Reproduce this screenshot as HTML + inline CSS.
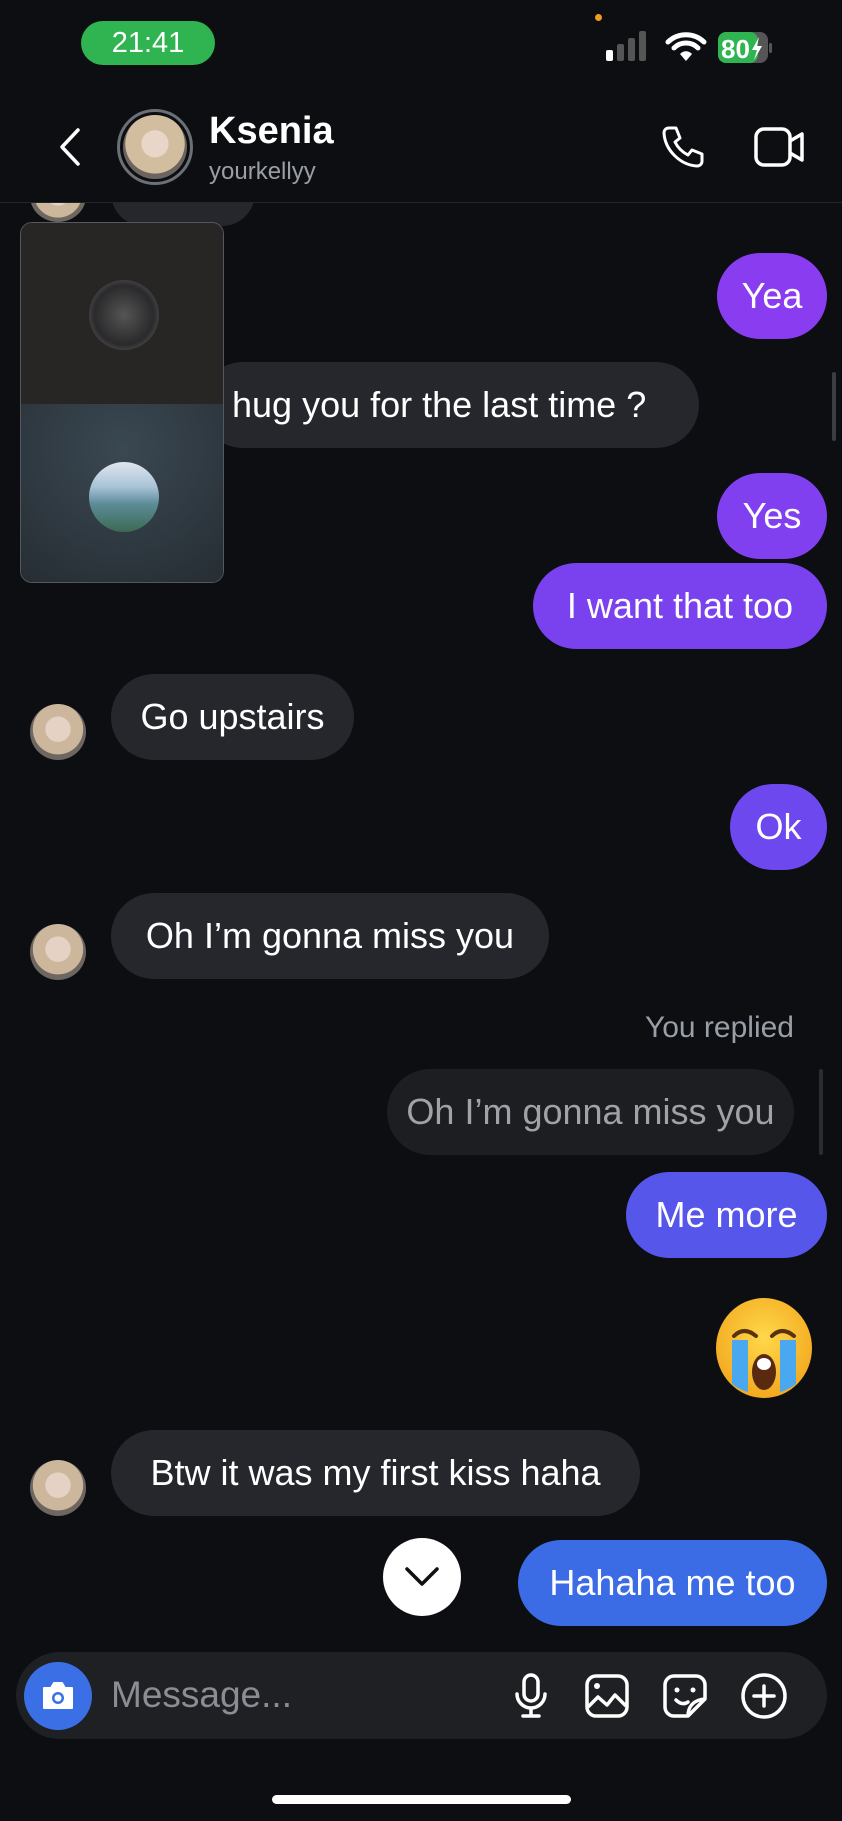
<!DOCTYPE html>
<html><head><meta charset="utf-8"><style>
*{margin:0;padding:0;box-sizing:border-box}
body{width:842px;height:1821px;background:#0c0e12;position:relative;overflow:hidden;font-family:"Liberation Sans",sans-serif;color:#fff}
.a{position:absolute}
.b{position:absolute;height:86px;border-radius:43px;line-height:86px;font-size:36px;white-space:nowrap;text-align:center;color:#fff}
.in{background:#25272c}
.av{position:absolute;width:56px;height:56px;border-radius:50%;background:radial-gradient(circle at 50% 45%,#e6d2c4 0 30%,#cdb79c 31% 60%,#6e6660 61%)}
</style></head><body>
<div class="a" style="left:81px;top:21px;width:134px;height:44px;border-radius:22px;background:#2fb451;font-size:29px;line-height:44px;text-align:center">21:41</div>
<div class="a" style="left:595px;top:14px;width:7px;height:7px;border-radius:50%;background:#f09a20"></div>
<svg class="a" style="left:606px;top:30px" width="184" height="36">
<rect x="0" y="20" width="7" height="11" rx="2" fill="#fff"/>
<rect x="11" y="14" width="7" height="17" rx="2" fill="#555"/>
<rect x="22" y="8" width="7" height="23" rx="2" fill="#555"/>
<rect x="33" y="1" width="7" height="30" rx="2" fill="#555"/>
<path d="M62 12a26 26 0 0 1 36 0M68 18a17 17 0 0 1 24 0" stroke="#fff" stroke-width="5" fill="none" stroke-linecap="round"/>
<path d="M74 24l6 7 6-7a8 8 0 0 0-12 0z" fill="#fff"/>
<rect x="112" y="2" width="50" height="31" rx="8" fill="#555"/>
<rect x="112" y="2" width="40" height="31" rx="8" fill="#2fb451"/>
<rect x="163" y="13" width="3" height="10" rx="1.5" fill="#555"/>
<text x="115" y="28" font-size="26" font-weight="bold" fill="#fff" font-family="Liberation Sans">80</text>
<path d="M153 7l-7 13h5l-3 10 8-14h-5z" fill="#fff"/>
</svg>
<svg class="a" style="left:56px;top:126px" width="30" height="42"><path d="M22 4L6 21l16 17" stroke="#fff" stroke-width="3.5" fill="none" stroke-linecap="round" stroke-linejoin="round"/></svg>
<div class="a" style="left:117px;top:109px;width:76px;height:76px;border-radius:50%;border:3px solid #6b6f76;padding:3px"><div style="width:100%;height:100%;border-radius:50%;background:radial-gradient(circle at 50% 45%,#e9d6c8 0 28%,#d2bd9f 29% 62%,#6c6460 63%)"></div></div>
<div class="a" style="left:209px;top:110px;font-size:38px;font-weight:bold">Ksenia</div>
<div class="a" style="left:209px;top:158px;font-size:24px;color:#9a9ea6">yourkellyy</div>
<svg class="a" style="left:660px;top:124px" width="46" height="46"><path d="M9 4l7 0 4 10-5 4c3 6 7 10 13 13l4-5 10 4v7c0 3-2 5-5 5C20 41 5 26 4 9c0-3 2-5 5-5z" stroke="#fff" stroke-width="3" fill="none" stroke-linejoin="round"/></svg>
<svg class="a" style="left:754px;top:126px" width="52" height="42"><rect x="2" y="3" width="34" height="36" rx="8" stroke="#fff" stroke-width="3.5" fill="none"/><path d="M36 15l12-7v26l-12-7" stroke="#fff" stroke-width="3.5" fill="none" stroke-linejoin="round"/></svg>
<div class="a" style="left:0;top:202px;width:842px;height:1px;background:#22252a"></div>
<div class="av" style="left:30px;top:170px;height:52px;clip-path:inset(33px 0 0 0)"></div>
<div class="a in" style="left:111px;top:160px;width:144px;height:66px;border-radius:33px;clip-path:inset(43px 0 0 0)"></div>
<div class="b" style="left:717px;top:253px;width:110px;background:#8a3cf0">Yea</div>
<div class="b in" style="left:200px;top:362px;width:499px;text-align:left;padding-left:32px">hug you for the last time ?</div>
<div class="b" style="left:717px;top:473px;width:110px;background:#8140f0">Yes</div>
<div class="b" style="left:533px;top:563px;width:294px;background:#7a41ef">I want that too</div>
<div class="av" style="left:30px;top:704px"></div>
<div class="b in" style="left:111px;top:674px;width:243px">Go upstairs</div>
<div class="b" style="left:730px;top:784px;width:97px;background:#6d48ee">Ok</div>
<div class="av" style="left:30px;top:924px"></div>
<div class="b in" style="left:111px;top:893px;width:438px">Oh I’m gonna miss you</div>
<div class="a" style="right:48px;top:1011px;font-size:30px;color:#9a9ea6">You replied</div>
<div class="b" style="left:387px;top:1069px;width:407px;background:#1c1e22;color:#a0a2a8">Oh I’m gonna miss you</div>
<div class="a" style="left:819px;top:1069px;width:4px;height:86px;border-radius:2px;background:#2a2d32"></div>
<div class="a" style="left:832px;top:372px;width:4px;height:69px;border-radius:2px;background:#3a3d42"></div>
<div class="b" style="left:626px;top:1172px;width:201px;background:#5656eb">Me more</div>
<svg class="a" style="left:714px;top:1296px" width="100" height="104" viewBox="0 0 100 104">
<defs><radialGradient id="g" cx="50%" cy="40%" r="60%"><stop offset="0" stop-color="#ffd84a"/><stop offset="1" stop-color="#f3a81f"/></radialGradient></defs>
<ellipse cx="50" cy="52" rx="48" ry="50" fill="url(#g)"/>
<path d="M20 40q10-10 22 0M58 40q10-10 22 0" stroke="#5a3010" stroke-width="4" fill="none" stroke-linecap="round"/>
<path d="M18 44h16v52q-8-2-16-8z" fill="#4aa8f0"/><path d="M66 44h16v44q-8 6-16 8z" fill="#4aa8f0"/>
<ellipse cx="50" cy="76" rx="12" ry="18" fill="#5a2a10"/><ellipse cx="50" cy="68" rx="7" ry="6" fill="#fff"/>
</svg>
<div class="av" style="left:30px;top:1460px"></div>
<div class="b in" style="left:111px;top:1430px;width:529px">Btw it was my first kiss haha</div>
<div class="a" style="left:383px;top:1538px;width:78px;height:78px;border-radius:50%;background:#fff"></div>
<svg class="a" style="left:403px;top:1563px" width="38" height="26"><path d="M4 6l15 15L34 6" stroke="#111" stroke-width="3.5" fill="none" stroke-linecap="round" stroke-linejoin="round"/></svg>
<div class="b" style="left:518px;top:1540px;width:309px;background:#3b6ce6">Hahaha me too</div>
<div class="a" style="left:20px;top:222px;width:204px;height:361px;border-radius:12px;border:1px solid #55585e;overflow:hidden">
<div style="height:181px;background:#282624"></div>
<div style="height:180px;background:radial-gradient(circle at 50% 25%,#3a4852,#262d33)"></div>
<div class="a" style="left:68px;top:57px;width:70px;height:70px;border-radius:50%;background:radial-gradient(circle,#555 0,#2a2a2c 60%,#7a7a78)"></div>
<div class="a" style="left:68px;top:239px;width:70px;height:70px;border-radius:50%;background:linear-gradient(#dfe6ec 0,#a9c3d8 35%,#5d8b98 60%,#3b6a52 100%)"></div>
</div>
<div class="a" style="left:16px;top:1652px;width:811px;height:87px;border-radius:44px;background:#1f2023"></div>
<div class="a" style="left:24px;top:1662px;width:68px;height:68px;border-radius:50%;background:#3b6fe6"></div>
<svg class="a" style="left:39px;top:1677px" width="38" height="38"><path d="M5 11h7l3-5h8l3 5h7v20H5z" fill="#fff" stroke="#fff" stroke-width="2" stroke-linejoin="round"/><circle cx="19" cy="21" r="6" fill="#3b6fe6"/><circle cx="19" cy="21" r="3.5" fill="#fff"/></svg>
<div class="a" style="left:111px;top:1674px;font-size:37px;color:#8a8d93">Message...</div>
<svg class="a" style="left:512px;top:1672px" width="40" height="48"><rect x="12" y="3" width="14" height="26" rx="7" stroke="#fff" stroke-width="3.5" fill="none"/><path d="M5 22a14 14 0 0 0 28 0M19 36v7M11 44h16" stroke="#fff" stroke-width="3.5" fill="none" stroke-linecap="round"/></svg>
<svg class="a" style="left:584px;top:1673px" width="46" height="46"><rect x="3" y="3" width="40" height="40" rx="9" stroke="#fff" stroke-width="3.5" fill="none"/><circle cx="13" cy="13" r="3" fill="#fff"/><path d="M4 34l10-10 9 8 8-10 11 11" stroke="#fff" stroke-width="3.5" fill="none" stroke-linejoin="round"/></svg>
<svg class="a" style="left:662px;top:1673px" width="46" height="46"><path d="M43 26V12a9 9 0 0 0-9-9H12a9 9 0 0 0-9 9v22a9 9 0 0 0 9 9h14z" stroke="#fff" stroke-width="3.5" fill="none" stroke-linejoin="round"/><path d="M26 43c0-9 5-16 17-17" stroke="#fff" stroke-width="3.5" fill="none"/><circle cx="15" cy="17" r="2.5" fill="#fff"/><circle cx="31" cy="17" r="2.5" fill="#fff"/><path d="M14 27q6 6 12 2" stroke="#fff" stroke-width="3.5" fill="none" stroke-linecap="round"/></svg>
<svg class="a" style="left:740px;top:1672px" width="48" height="48"><circle cx="24" cy="24" r="21" stroke="#fff" stroke-width="3.5" fill="none"/><path d="M24 14v20M14 24h20" stroke="#fff" stroke-width="3.5" stroke-linecap="round"/></svg>
<div class="a" style="left:272px;top:1795px;width:299px;height:9px;border-radius:5px;background:#fff"></div>
</body></html>
